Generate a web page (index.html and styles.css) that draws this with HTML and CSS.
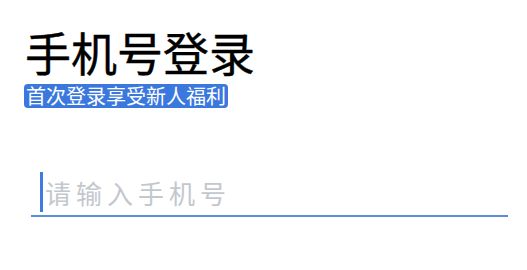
FILE: index.html
```html
<!DOCTYPE html>
<html lang="zh-CN">
<head>
<meta charset="utf-8">
<title>手机号登录</title>
<link rel="stylesheet" href="styles.css">
</head>
<body>
<div class="page">
  <h1 class="title">手机号登录</h1>
  <span class="badge">首次登录享受新人福利</span>
  <div class="field">
    <span class="caret"></span>
    <span class="placeholder">请输入手机号</span>
  </div>
</div>
</body>
</html>
```

FILE: styles.css
```css
html, body {
  margin: 0;
  padding: 0;
  background: #ffffff;
}
body {
  font-family: "Noto Sans CJK SC", "Noto Sans", sans-serif;
}
.page {
  padding: 18px 19px 0 24px;
  display: flex;
  flex-direction: column;
  align-items: flex-start;
}
.title {
  margin: 0 0 0 1px;
  font-size: 46px;
  line-height: 66px;
  font-weight: 400;
  color: #000000;
  -webkit-text-stroke: 0.4px #000000;
}
.badge {
  font-size: 20px;
  line-height: 24px;
  padding: 0 2px;
  border-radius: 4px;
  background: #3a78de;
  color: #ffffff;
}
.field {
  align-self: stretch;
  margin: 64px 0 0 7px;
  display: flex;
  align-items: center;
  padding-bottom: 3px;
  border-bottom: 2px solid #5a8ed8;
}
.caret {
  width: 3px;
  height: 40px;
  margin-left: 9px;
  background: #3f7be0;
}
.placeholder {
  margin-left: 2px;
  font-size: 26px;
  letter-spacing: 5px;
  color: #c3c7ce;
}
```
